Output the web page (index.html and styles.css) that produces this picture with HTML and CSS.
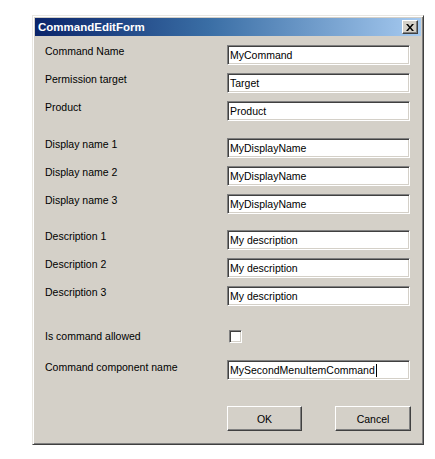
FILE: index.html
```html
<!DOCTYPE html>
<html>
<head>
<meta charset="utf-8">
<link rel="stylesheet" href="styles.css">
</head>
<body>
<div class="window">
  <div class="titlebar">
    <span class="title">CommandEditForm</span>
    <span class="close"><svg width="8" height="7" viewBox="0 0 8 7"><path d="M0 0h2l2 2.5L6 0h2L5 3.5 8 7H6L4 4.5 2 7H0l3-3.5z" fill="#000"/></svg></span>
  </div>
  <div class="body">
    <div class="group">
      <div class="row"><span class="label">Command Name</span><span class="field">MyCommand</span></div>
      <div class="row"><span class="label">Permission target</span><span class="field">Target</span></div>
      <div class="row"><span class="label">Product</span><span class="field">Product</span></div>
    </div>
    <div class="group">
      <div class="row"><span class="label">Display name 1</span><span class="field">MyDisplayName</span></div>
      <div class="row"><span class="label">Display name 2</span><span class="field">MyDisplayName</span></div>
      <div class="row"><span class="label">Display name 3</span><span class="field">MyDisplayName</span></div>
    </div>
    <div class="group">
      <div class="row"><span class="label">Description 1</span><span class="field">My description</span></div>
      <div class="row"><span class="label">Description 2</span><span class="field">My description</span></div>
      <div class="row"><span class="label">Description 3</span><span class="field">My description</span></div>
    </div>
    <div class="row row-check"><span class="label">Is command allowed</span><span class="checkcell"><span class="checkbox"></span></span></div>
    <div class="row row-comp"><span class="label">Command component name</span><span class="field">MySecondMenuItemCommand<span class="caret"></span></span></div>
    <div class="buttons">
      <span class="btn btn-ok">OK</span>
      <span class="btn btn-cancel">Cancel</span>
    </div>
  </div>
</div>
</body>
</html>
```

FILE: styles.css
```css
html, body {
  margin: 0;
  padding: 0;
  background: #ffffff;
}
body {
  padding: 15px 0 0 32px;
  font-family: "Liberation Sans", Arial, sans-serif;
  font-size: 10.5px;
  color: #000;
}
.window {
  width: 392px;
  height: 430px;
  box-sizing: border-box;
  background: #d4d0c8;
  border-style: solid;
  border-width: 1px;
  border-color: #e8e6e1 #404040 #404040 #e8e6e1;
  box-shadow: inset 1px 1px 0 #ffffff, inset -1px -1px 0 #808080;
  padding: 2px;
  display: flex;
  flex-direction: column;
}
.titlebar {
  height: 18px;
  background: linear-gradient(to right, #0a246a 0%, #3a6ea5 45%, #a6caf0 100%);
  display: flex;
  align-items: center;
  justify-content: space-between;
  padding: 0 3px 0 3px;
}
.title {
  color: #fff;
  font-weight: bold;
  font-size: 11.5px;
  font-family: "Liberation Sans", Arial, sans-serif;
}
.close {
  width: 16px;
  height: 14px;
  box-sizing: border-box;
  background: #d4d0c8;
  border-style: solid;
  border-width: 1px;
  border-color: #ffffff #404040 #404040 #ffffff;
  box-shadow: inset -1px -1px 0 #808080;
  display: flex;
  align-items: center;
  justify-content: center;
}
.body {
  padding: 9px 0 0 10px;
  display: flex;
  flex-direction: column;
}
.group {
  display: flex;
  flex-direction: column;
  gap: 8px;
}
.group + .group {
  margin-top: 17px;
}
.group + .group + .group {
  margin-top: 16px;
}
.row {
  display: grid;
  grid-template-columns: 182px 183px;
  height: 20px;
}
.label {
  line-height: 14px;
  margin-top: -1px;
}
.field {
  box-sizing: border-box;
  height: 20px;
  background: #fff;
  border-style: solid;
  border-width: 1px;
  border-color: #808080 #ffffff #ffffff #808080;
  box-shadow: inset 1px 1px 0 #404040, inset -1px -1px 0 #d4d0c8;
  padding: 0 2px;
  line-height: 18px;
  font-size: 10.5px;
  white-space: nowrap;
  display: flex;
  align-items: center;
}
.caret {
  display: inline-block;
  width: 1px;
  height: 13px;
  background: #000;
  margin-left: 1px;
}
.row-check {
  margin-top: 21px;
}
.row-check .label {
  margin-top: 2px;
}
.checkcell {
  padding: 3px 0 0 2px;
}
.checkbox {
  display: block;
  width: 13px;
  height: 13px;
  box-sizing: border-box;
  background: #fff;
  border-style: solid;
  border-width: 1px;
  border-color: #808080 #ffffff #ffffff #808080;
  box-shadow: inset 1px 1px 0 #404040, inset -1px -1px 0 #d4d0c8;
}
.row-comp {
  margin-top: 13px;
}
.row-comp .label {
  margin-top: 0;
}
.buttons {
  display: flex;
  margin-top: 26px;
  padding-left: 182px;
  gap: 33px;
}
.btn {
  box-sizing: border-box;
  width: 75px;
  height: 25px;
  border-style: solid;
  border-width: 1px;
  border-color: #ffffff #404040 #404040 #ffffff;
  box-shadow: inset -1px -1px 0 #808080;
  display: flex;
  align-items: center;
  justify-content: center;
  font-size: 10.5px;
}
.btn-cancel {
  width: 76px;
}
```
